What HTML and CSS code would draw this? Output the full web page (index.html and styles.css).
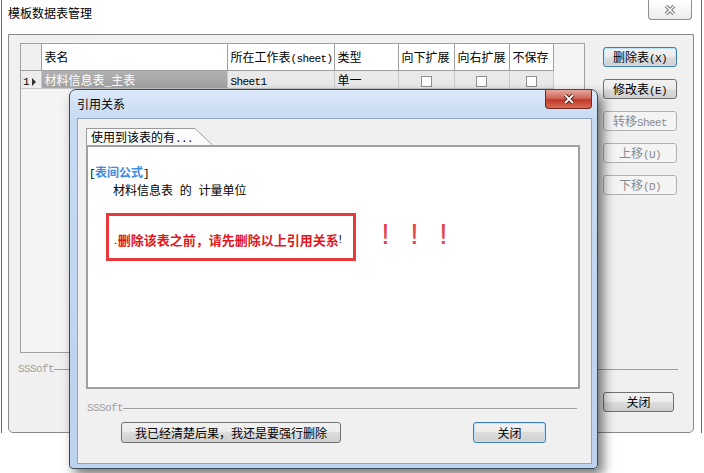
FILE: index.html
```html
<!DOCTYPE html>
<html lang="zh-CN">
<head>
    <meta charset="UTF-8">
    <title>模板数据表管理</title>
    <link rel="stylesheet" href="styles.css">
</head>
<body>
<div class="desk">
    <!-- fenêtre principale -->
    <div class="win-main">
        <div class="main-title">
            <span class="main-caption">模板数据表管理</span>
            <span class="main-x">
                <svg width="12" height="10" viewBox="0 0 12 10"><path d="M2 1L10 9M10 1L2 9" stroke="#7b7b7b" stroke-width="3.6" fill="none"/><path d="M2 1L10 9M10 1L2 9" stroke="#fff" stroke-width="1.5" fill="none"/></svg>
            </span>
        </div>
        <div class="main-body">
            <div class="main-row">
                <div class="grid">
                    <table class="grid-table">
                        <tr class="grid-head">
                            <th class="rh"></th>
                            <th class="c-name">表名</th>
                            <th class="c-sheet">所在工作表<span class="lat">(sheet)</span></th>
                            <th class="c-type">类型</th>
                            <th class="c-down">向下扩展</th>
                            <th class="c-right">向右扩展</th>
                            <th class="c-save">不保存</th>
                        </tr>
                        <tr class="grid-row">
                            <td class="rh"><span class="lat">1</span><span class="arrow"></span></td>
                            <td class="sel">材料信息表_主表</td>
                            <td><span class="lat">Sheet1</span></td>
                            <td>单一</td>
                            <td class="chk"><span class="box"></span></td>
                            <td class="chk"><span class="box"></span></td>
                            <td class="chk"><span class="box"></span></td>
                        </tr>
                    </table>
                </div>
                <div class="side">
                    <button class="btn focus">删除表<span class="lat">(X)</span></button>
                    <button class="btn">修改表<span class="lat">(E)</span></button>
                    <button class="btn" disabled>转移<span class="lat">Sheet</span></button>
                    <button class="btn" disabled>上移<span class="lat">(U)</span></button>
                    <button class="btn" disabled>下移<span class="lat">(D)</span></button>
                </div>
            </div>
            <div class="brand main-brand"><span class="lat">SSSoft</span><i></i></div>
            <div class="main-foot"><button class="btn btn-close">关闭</button></div>
        </div>
    </div>

    <!-- fenêtre de dialogue -->
    <div class="dlg">
        <div class="dlg-title">
            <span class="dlg-caption">引用关系</span>
            <span class="dlg-x">
                <svg width="12" height="10" viewBox="0 0 12 10"><path d="M2 1L10 9M10 1L2 9" stroke="#4a1a14" stroke-width="3.8" fill="none"/><path d="M2 1L10 9M10 1L2 9" stroke="#fff" stroke-width="1.8" fill="none"/></svg>
            </span>
        </div>
        <div class="dlg-client">
            <div class="tab">
                <div class="tab-body">使用到该表的有<span class="lat">...</span></div>
                <svg class="tab-slant" width="18" height="17" viewBox="0 0 18 17"><polygon points="0,0 0.5,0 18,17 0,17" fill="#fbfbfb"/><path d="M0 0.5L17.5 17" stroke="#9a9a9a" stroke-width="1" fill="none"/></svg>
            </div>
            <div class="panel">
                <div class="ref-head"><span class="lat">[</span><b>表间公式</b><span class="lat">]</span></div>
                <div class="ref-item">材料信息表 的 计量单位</div>
                <div class="warn-row">
                    <div class="warn-box">
                        <span class="dot">.</span><span class="warn-text">删除该表之前，请先删除以上引用关系</span><span class="bang">!</span>
                    </div>
                    <div class="marks"><span>!</span><span>!</span><span>!</span></div>
                </div>
            </div>
            <div class="brand dlg-brand"><span class="lat">SSSoft</span><i></i></div>
            <div class="dlg-foot">
                <button class="btn btn-force">我已经清楚后果，我还是要强行删除</button>
                <button class="btn focus btn-close2">关闭</button>
            </div>
        </div>
    </div>
</div>
</body>
</html>
```

FILE: styles.css
```css
* {
    box-sizing: border-box;
}
body {
    margin: 0;
    background-color: #fff;
    font-family: "Noto Sans CJK SC", sans-serif;
    font-size: 12px;
    color: #000;
}
.desk {
    position: relative;
    width: 704px;
    height: 473px;
    overflow: hidden;
}
.lat {
    font-family: "Liberation Mono", monospace;
    font-size: 11px;
    letter-spacing: -0.6px;
}

/* fenêtre principale */
.win-main {
    position: absolute;
    left: 1px;
    top: 0;
    width: 701px;
    height: 433px;
    border-left: 1px solid #6d6d6d;
    border-right: 1px solid #6d6d6d;
    padding: 0 7px 0 6px;
    display: flex;
    flex-direction: column;
}
.main-title {
    height: 34px;
    display: flex;
    justify-content: space-between;
    align-items: flex-start;
}
.main-caption {
    line-height: 16px;
    padding-top: 5px;
}
.main-x {
    width: 44px;
    height: 20px;
    margin-right: 2px;
    border: 1px solid #8d8d8d;
    border-top: none;
    border-radius: 0 0 4px 4px;
    background: linear-gradient(#fff, #ececec);
    display: flex;
    align-items: center;
    justify-content: center;
}
.main-body {
    flex: 1;
    background-color: #f0f0f0;
    border: 1px solid #8a8a8a;
    border-radius: 0 0 5px 5px;
    padding: 8px 0 0 11px;
    display: flex;
    flex-direction: column;
}
.main-row {
    display: flex;
    gap: 18px;
}
.grid {
    width: 565px;
    height: 310px;
    border: 1px solid #a0a0a0;
    background-color: #f4f4f4;
}
.grid-table {
    border-collapse: collapse;
    table-layout: fixed;
}
.grid-table th,
.grid-table td {
    padding: 0 0 0 3px;
    text-align: left;
    font-weight: normal;
    white-space: nowrap;
    overflow: hidden;
}
.grid-head th {
    height: 26px;
    background-color: #fff;
    border-right: 1px solid #a0a0a0;
    border-bottom: 1px solid #a0a0a0;
}
.grid-head th.rh {
    background-color: #f0f0f0;
}
.rh { width: 20px; }
.c-name { width: 186px; }
.c-sheet { width: 107px; }
.c-type { width: 64px; }
.c-down { width: 56px; }
.c-right { width: 55px; }
.c-save { width: 44px; }
.grid-row td {
    height: 18px;
    background-color: #e9e9e9;
    border-right: 1px solid #c8c8c8;
    border-bottom: 1px solid #c8c8c8;
}
.grid-row td.rh {
    background-color: #ececec;
    padding-left: 2px;
}
.arrow {
    display: inline-block;
    margin-left: 3px;
    border-left: 4px solid #333;
    border-top: 4px solid transparent;
    border-bottom: 4px solid transparent;
    vertical-align: -1px;
}
.grid-row td.sel {
    background: linear-gradient(#b0b0b0, #a2a2a2);
    color: #fff;
}
.grid-row td.chk {
    text-align: center;
    padding: 0;
}
.box {
    display: inline-block;
    width: 11px;
    height: 11px;
    border: 1px solid #8e8f8f;
    background-color: #fff;
    vertical-align: middle;
}
.side {
    display: flex;
    flex-direction: column;
    gap: 12px;
    padding-top: 4px;
}
.side .btn {
    width: 74px;
}

/* boutons */
.btn {
    font-family: "Noto Sans CJK SC", sans-serif;
    font-size: 12px;
    height: 20px;
    padding: 0;
    line-height: 18px;
    color: #000;
    border: 1px solid #707070;
    border-radius: 3px;
    background: linear-gradient(#f2f2f2 0%, #ebebeb 49%, #dddddd 50%, #cfcfcf 100%);
}
.btn.focus {
    border-color: #3c7fb1;
    box-shadow: inset 0 0 0 1px #bfe2f7;
}
.btn:disabled {
    color: #8a8a8a;
    border-color: #adb2b5;
    background: #f4f4f4;
}
.brand {
    display: flex;
    align-items: center;
    color: #a0a0a0;
    line-height: 12px;
}
.brand i {
    flex: 1;
    height: 1px;
    background-color: #a0a0a0;
}
.main-brand {
    margin: 10px 15px 0 -2px;
}
.main-foot {
    padding-left: 583px;
    margin-top: 17px;
}
.btn-close {
    width: 71px;
}

/* dialogue */
.dlg {
    position: absolute;
    left: 69px;
    top: 89px;
    width: 529px;
    height: 380px;
    border: 1px solid #3e4a57;
    border-radius: 7px 7px 4px 4px;
    background: linear-gradient(#dce9f8, #c6daf2 30px, #bcd2ee);
    padding: 0 5px 4px 7px;
    box-shadow: 5px 6px 12px rgba(0,0,0,0.55);
    display: flex;
    flex-direction: column;
}
.dlg-title {
    height: 28px;
    display: flex;
    justify-content: space-between;
    align-items: flex-start;
}
.dlg-caption {
    line-height: 16px;
    padding-top: 6px;
}
.dlg-x {
    width: 47px;
    height: 19px;
    border: 1px solid #6d2a22;
    border-top: none;
    border-radius: 0 0 4px 4px;
    background: linear-gradient(#e6a99f, #d2665a 45%, #c0392b 55%, #d96a4f);
    display: flex;
    align-items: center;
    justify-content: center;
}
.dlg-client {
    flex: 1;
    background-color: #f0f0f0;
    border: 1px solid #8ea4c1;
    padding: 9px 11px 0 8px;
    display: flex;
    flex-direction: column;
}
.tab {
    display: flex;
    height: 17px;
}
.tab-body {
    width: 109px;
    border-top: 1px solid #9a9a9a;
    border-left: 1px solid #9a9a9a;
    background-color: #fbfbfb;
    padding-left: 4px;
    line-height: 15px;
}
.panel {
    height: 244px;
    border: 2px solid #a0a0a0;
    background-color: #fff;
    padding: 17px 0 0 1px;
}
.ref-head {
    line-height: 16px;
}
.ref-head b {
    color: #3d8ee0;
}
.ref-item {
    line-height: 16px;
    padding-left: 24px;
    word-spacing: 4px;
}
.warn-row {
    display: flex;
    margin: 15px 0 0 17px;
}
.warn-box {
    width: 250px;
    height: 48px;
    border: 3px solid #e5393b;
    padding: 4px 0 0 5px;
    display: flex;
    align-items: center;
}
.dot {
    font-size: 10px;
    margin-right: 1px;
}
.warn-text {
    color: #e3161c;
    font-size: 13px;
    font-weight: bold;
}
.bang {
    font-family: "Liberation Sans", sans-serif;
    font-size: 11px;
}
.marks {
    display: flex;
    margin: 6px 0 0 15px;
    align-self: flex-start;
}
.marks span {
    width: 29px;
    text-align: center;
    font-family: "Liberation Sans", sans-serif;
    font-size: 30px;
    line-height: 30px;
    color: #e4434b;
}
.dlg-brand {
    margin: 13px 3px 0 1px;
}
.dlg-foot {
    display: flex;
    gap: 132px;
    margin-top: 8px;
    padding-left: 35px;
}
.dlg-foot .btn {
    height: 21px;
}
.btn-force {
    width: 220px;
}
.btn-close2 {
    width: 73px;
}
```
